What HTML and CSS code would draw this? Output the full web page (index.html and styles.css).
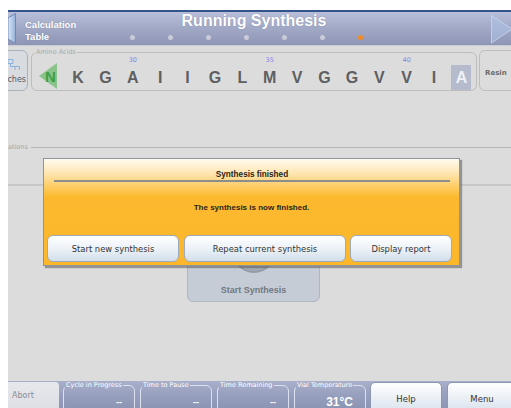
FILE: index.html
```html
<!DOCTYPE html>
<html lang="en">
<head>
<meta charset="utf-8">
<title>Running Synthesis</title>
<link rel="stylesheet" href="styles.css">
</head>
<body>
<div class="screen">
  <header class="topbar">
    <svg class="back-arrow" width="9" height="33" viewBox="0 0 9 33">
      <defs>
        <linearGradient id="backFill" x1="0" y1="0" x2="1" y2="0">
          <stop offset="0" stop-color="#dbe6f6"/>
          <stop offset="1" stop-color="#93b2da"/>
        </linearGradient>
      </defs>
      <polygon points="0,6 7.5,1.5 7.5,31.5 0,27" fill="url(#backFill)" stroke="#6f89b6" stroke-width="1"/>
    </svg>
    <div class="nav-label">Calculation<br>Table</div>
    <div class="title-block">
      <div class="title">Running Synthesis</div>
      <div class="steps">
        <span class="dot"></span><span class="dot"></span><span class="dot"></span><span class="dot"></span><span class="dot"></span><span class="dot"></span><span class="dot current"></span>
      </div>
    </div>
    <svg class="next-arrow" width="21" height="33" viewBox="0 0 21 33">
      <polygon points="1.5,3.5 22,17 1.5,31" fill="rgba(175,195,230,0.55)" stroke="rgba(200,215,240,0.8)" stroke-width="1"/>
    </svg>
  </header>

  <main class="workspace">
    <div class="seq-row">
      <div class="side-btn">
        <svg class="side-icon" width="14" height="14" viewBox="0 0 14 14">
          <path d="M1 2.5h5v4h-5z M3.5 6.5v3 M3.5 9.5h9 M8 9.5v3.5 M12.5 9.5v3.5" fill="none" stroke="#88b2dc" stroke-width="1"/>
        </svg>
        <span class="side-text">ches</span>
      </div>
      <fieldset class="amino">
        <legend>Amino Acids</legend>
        <div class="residues">
          <svg class="n-term" width="18" height="28" viewBox="0 0 18 28">
            <polygon points="0,14 18,1 18,27" fill="#6dbb6d" fill-opacity="0.75"/>
            <text x="11.5" y="20" text-anchor="middle" class="n-letter">N</text>
          </svg>
          <div class="res"><span class="num"></span><span class="aa">K</span></div>
          <div class="res"><span class="num"></span><span class="aa">G</span></div>
          <div class="res"><span class="num">30</span><span class="aa">A</span></div>
          <div class="res"><span class="num"></span><span class="aa">I</span></div>
          <div class="res"><span class="num"></span><span class="aa">I</span></div>
          <div class="res"><span class="num"></span><span class="aa">G</span></div>
          <div class="res"><span class="num"></span><span class="aa">L</span></div>
          <div class="res"><span class="num">35</span><span class="aa">M</span></div>
          <div class="res"><span class="num"></span><span class="aa">V</span></div>
          <div class="res"><span class="num"></span><span class="aa">G</span></div>
          <div class="res"><span class="num"></span><span class="aa">G</span></div>
          <div class="res"><span class="num"></span><span class="aa">V</span></div>
          <div class="res"><span class="num">40</span><span class="aa">V</span></div>
          <div class="res"><span class="num"></span><span class="aa">I</span></div>
          <div class="res"><span class="num"></span><span class="aa active">A</span></div>
        </div>
      </fieldset>
      <div class="resin">Resin</div>
    </div>

    <div class="section-rule"><span class="section-name">ations</span><span class="rule-line"></span></div>
    <div class="bar-rule"></div>

    <div class="start-btn">
      <span class="knob"></span>
      <span class="start-text">Start Synthesis</span>
    </div>

    <div class="dialog">
      <div class="dialog-title">Synthesis finished</div>
      <div class="dialog-msg">The synthesis is now finished.</div>
      <div class="dialog-actions">
        <button class="dlg-btn btn-new">Start new synthesis</button>
        <button class="dlg-btn btn-repeat">Repeat current synthesis</button>
        <button class="dlg-btn btn-report">Display report</button>
      </div>
    </div>
  </main>

  <footer class="statusbar">
    <div class="abort">Abort</div>
    <fieldset class="stat"><legend>Cycle in Progress</legend><div class="stat-val">--</div></fieldset>
    <fieldset class="stat"><legend>Time to Pause</legend><div class="stat-val">--</div></fieldset>
    <fieldset class="stat"><legend>Time Remaining</legend><div class="stat-val">--</div></fieldset>
    <fieldset class="stat"><legend>Vial Temperature</legend><div class="stat-val big">31°C</div></fieldset>
    <div class="foot-btn help">Help</div>
    <div class="foot-btn menu">Menu</div>
  </footer>
</div>
</body>
</html>
```

FILE: styles.css
```css
html, body {
  margin: 0;
  padding: 0;
  overflow: hidden;
}

body {
  margin: 10px 0 0 8px;
  background: #ffffff;
  font-family: "DejaVu Sans", sans-serif;
}

.screen {
  width: 503px;
  height: 398px;
  display: flex;
  flex-direction: column;
  overflow: hidden;
}

/* ---------- top bar ---------- */
.topbar {
  height: 35px;
  box-sizing: border-box;
  border-top: 2px solid #33538c;
  background: linear-gradient(#b9bfd9 0%, #a3aac8 45%, #8e96b5 100%);
  display: flex;
  flex-shrink: 0;
}

.back-arrow {
  display: block;
  flex-shrink: 0;
}

.nav-label {
  margin-left: 8px;
  width: 95px;
  padding-top: 6.5px;
  font-family: "Liberation Sans", Arial, sans-serif;
  font-weight: bold;
  font-size: 9.5px;
  line-height: 12px;
  color: #ffffff;
  text-shadow: 0 0 1px rgba(80, 90, 130, 0.5);
}

.title-block {
  width: 268px;
  flex-shrink: 0;
}

.title {
  font-family: "Liberation Sans", Arial, sans-serif;
  font-weight: bold;
  font-size: 16px;
  line-height: 18px;
  color: #ffffff;
  text-align: center;
  text-shadow: 0 0 1px rgba(80, 90, 130, 0.6);
}

.steps {
  display: flex;
  gap: 33px;
  padding-left: 9.5px;
  margin-top: 4.5px;
}

.dot {
  width: 5px;
  height: 5px;
  border-radius: 50%;
  background: #c9cbd8;
}

.dot.current {
  background: #f28a23;
}

.next-arrow {
  display: block;
  margin-left: auto;
  flex-shrink: 0;
}

/* ---------- workspace ---------- */
.workspace {
  position: relative;
  height: 336px;
  flex-shrink: 0;
  background: #dcdcdc;
  border-top: 1px solid #c9cbd2;
  box-sizing: border-box;
}

.seq-row {
  display: flex;
  align-items: flex-start;
  margin-top: 2px;
}

.side-btn {
  margin-top: 2px;
  margin-left: -20px;
  width: 40px;
  height: 41px;
  box-sizing: border-box;
  border: 1px solid #a9b1bd;
  border-radius: 6px;
  background: #d8dbe0;
  display: flex;
  flex-direction: column;
  align-items: flex-end;
  padding-right: 1px;
  flex-shrink: 0;
}

.side-icon {
  display: block;
  margin-top: 6px;
  margin-right: 5px;
}

.side-text {
  margin-top: 4px;
  font-size: 8px;
  line-height: 10px;
  color: #555a60;
}

.amino {
  margin: 0 0 0 3px;
  padding: 0;
  min-width: 0;
  width: 446px;
  height: 43px;
  box-sizing: border-box;
  border: 1px solid #bdbdbd;
  border-radius: 6px;
  flex-shrink: 0;
}

.amino legend {
  margin-left: 3px;
  padding: 0 1px;
  font-size: 6.5px;
  line-height: 8px;
  color: #a9a9a9;
}

.residues {
  display: flex;
  align-items: flex-start;
}

.n-term {
  display: block;
  margin-left: 7px;
  margin-top: 6px;
  margin-right: 7.3px;
  flex-shrink: 0;
}

.n-letter {
  font-family: "Liberation Sans", Arial, sans-serif;
  font-weight: bold;
  font-size: 15px;
  fill: #3f9e46;
}

.res {
  width: 27.4px;
  flex-shrink: 0;
  display: flex;
  flex-direction: column;
  align-items: center;
}

.num {
  height: 8px;
  font-size: 6.5px;
  line-height: 8px;
  color: #8484e6;
}

.aa {
  margin-top: 1px;
  height: 25px;
  width: 20px;
  text-align: center;
  font-family: "Liberation Sans", Arial, sans-serif;
  font-weight: bold;
  font-size: 16px;
  line-height: 25px;
  color: #5e5f61;
}

.aa.active {
  background: #b5bbcd;
  color: #eef0f6;
}

.resin {
  margin-left: 2px;
  margin-top: 2px;
  width: 40px;
  height: 41px;
  box-sizing: border-box;
  border: 1px solid #bdbdbd;
  border-radius: 6px;
  padding: 3px 0 0 5px;
  font-size: 7px;
  font-weight: bold;
  line-height: 39px;
  color: #6a6a6a;
  flex-shrink: 0;
}

.section-rule {
  display: flex;
  align-items: center;
  height: 8px;
  margin-top: 52px;
}

.section-name {
  font-size: 6.5px;
  line-height: 8px;
  color: #a3a7ab;
}

.rule-line {
  flex: 1;
  height: 1px;
  margin-left: 3px;
  background: #b4b8bc;
}

.bar-rule {
  margin-top: 33px;
  height: 2px;
  background: #c7c7c7;
}

.start-btn {
  position: relative;
  overflow: hidden;
  margin-top: 34px;
  margin-left: 179px;
  width: 133px;
  height: 82px;
  box-sizing: border-box;
  border: 1px solid #b0b7c2;
  border-radius: 6px;
  background: #c5ccd6;
  display: flex;
  flex-direction: column;
  align-items: center;
}

.knob {
  margin-top: 8px;
  width: 44px;
  height: 44px;
  box-sizing: border-box;
  border-radius: 50%;
  background: #a3a9b3;
  border: 2px solid #959ca7;
}

.start-text {
  margin-top: 11px;
  font-family: "Liberation Sans", Arial, sans-serif;
  font-weight: bold;
  font-size: 9px;
  line-height: 12px;
  color: #717880;
}

/* ---------- dialog ---------- */
.dialog {
  position: absolute;
  left: 35px;
  top: 112px;
  width: 417px;
  height: 108px;
  box-sizing: border-box;
  border: 1px solid #8e949c;
  background: linear-gradient(#fffbf0 0px, #fee6b2 14px, #fdcb62 28px, #fcb92f 38px, #fcb72b 100%);
  box-shadow: 2px 2px 1px rgba(90, 90, 90, 0.55);
  padding-top: 10px;
}

.dialog-title {
  margin: 0 9px 0 10px;
  border-bottom: 2px solid #8c8c8c;
  font-family: "Liberation Sans", Arial, sans-serif;
  font-weight: bold;
  font-size: 8.2px;
  line-height: 11px;
  text-align: center;
  color: #2b2418;
}

.dialog-msg {
  margin-top: 20px;
  font-family: "Liberation Sans", Arial, sans-serif;
  font-weight: bold;
  font-size: 8px;
  line-height: 12px;
  text-align: center;
  color: #2b2418;
}

.dialog-actions {
  display: flex;
  margin-top: 21px;
  padding-left: 3px;
}

.dlg-btn {
  height: 27px;
  box-sizing: border-box;
  border: 1px solid #9eabba;
  border-radius: 6px;
  background: linear-gradient(#ffffff 0%, #eef3f8 45%, #d3dfeb 100%);
  font-family: "DejaVu Sans", sans-serif;
  font-size: 8.4px;
  color: #333333;
  padding: 0;
  margin: 0;
}

.btn-new {
  width: 132px;
}

.btn-repeat {
  width: 162px;
  margin-left: 5px;
}

.btn-report {
  width: 102px;
  margin-left: 4px;
}

/* ---------- status bar ---------- */
.statusbar {
  height: 27px;
  flex-shrink: 0;
  display: flex;
  align-items: flex-start;
  background: linear-gradient(#a9b0cb 0%, #98a0bf 50%, #8d95b5 100%);
  overflow: hidden;
}

.abort {
  margin-top: 1px;
  width: 51px;
  height: 30px;
  box-sizing: border-box;
  border-radius: 0 4px 0 0;
  background: linear-gradient(#e7e8ec, #dcdee5);
  padding: 8px 0 0 4px;
  font-size: 8px;
  line-height: 12px;
  color: #8c8c90;
  flex-shrink: 0;
}

.stat {
  margin: 0 0 0 5px;
  padding: 0;
  min-width: 0;
  width: 72px;
  height: 32px;
  box-sizing: border-box;
  border: 1px solid #dde1ef;
  border-radius: 6px;
  flex-shrink: 0;
}

.stat:first-of-type {
  margin-left: 4px;
}

.stat legend {
  margin-left: 1px;
  padding: 0 1px;
  font-size: 6.5px;
  line-height: 8px;
  color: #ffffff;
}

.stat-val {
  margin-top: 7px;
  padding-right: 12px;
  text-align: right;
  font-family: "Liberation Sans", Arial, sans-serif;
  font-weight: bold;
  font-size: 9px;
  line-height: 12px;
  color: #ffffff;
}

.stat-val.big {
  font-size: 12px;
}

.foot-btn {
  margin-top: 1px;
  height: 30px;
  box-sizing: border-box;
  border: 1px solid #8e97b2;
  border-radius: 5px 5px 0 0;
  background: linear-gradient(#ffffff 0%, #eef2f7 45%, #d9e3ee 100%);
  padding-top: 10px;
  text-align: center;
  font-size: 8.5px;
  line-height: 12px;
  color: #333333;
  flex-shrink: 0;
}

.help {
  margin-left: 4px;
  width: 72px;
}

.menu {
  margin-left: 5px;
  width: 70px;
}
```
